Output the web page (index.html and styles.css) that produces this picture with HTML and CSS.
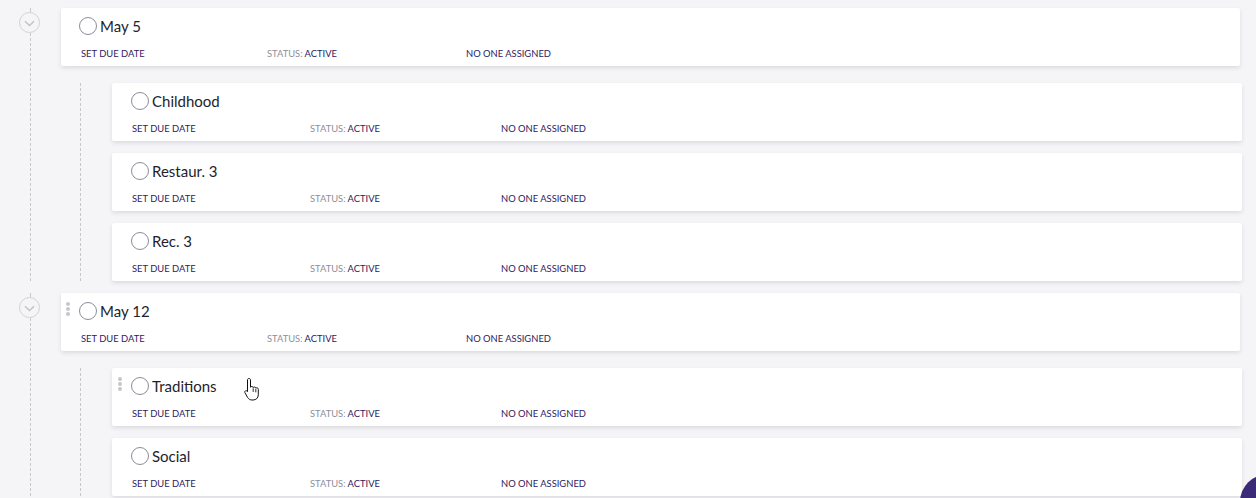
FILE: index.html
```html
<!DOCTYPE html>
<html lang="en">
<head>
  <meta charset="UTF-8">
  <title>Tasks</title>
  <link rel="stylesheet" href="styles.css">
</head>
<body>

  <div id="task-tree">

    <div class="group">
      <div class="rail">
        <div class="rail-top"></div>
        <div class="toggle">
          <svg width="11" height="7" viewBox="0 0 11 7"><path d="M1 1.2l4.5 4.3 4.5-4.3" fill="none" stroke="#c2c2ca" stroke-width="1.5"/></svg>
        </div>
        <div class="rail-line"></div>
      </div>
      <div class="group-body">
        <div class="card parent">
          <div class="card-title"><span class="check"></span>May 5</div>
          <div class="meta">
            <span class="due">SET DUE DATE</span>
            <span class="status"><em>STATUS:</em> ACTIVE</span>
            <span class="assignee">NO ONE ASSIGNED</span>
          </div>
        </div>
        <div class="children">
          <div class="child-rail"></div>
          <div class="child-list">
            <div class="card child">
              <div class="card-title"><span class="check"></span>Childhood</div>
              <div class="meta">
                <span class="due">SET DUE DATE</span>
                <span class="status"><em>STATUS:</em> ACTIVE</span>
                <span class="assignee">NO ONE ASSIGNED</span>
              </div>
            </div>
            <div class="card child">
              <div class="card-title"><span class="check"></span>Restaur. 3</div>
              <div class="meta">
                <span class="due">SET DUE DATE</span>
                <span class="status"><em>STATUS:</em> ACTIVE</span>
                <span class="assignee">NO ONE ASSIGNED</span>
              </div>
            </div>
            <div class="card child">
              <div class="card-title"><span class="check"></span>Rec. 3</div>
              <div class="meta">
                <span class="due">SET DUE DATE</span>
                <span class="status"><em>STATUS:</em> ACTIVE</span>
                <span class="assignee">NO ONE ASSIGNED</span>
              </div>
            </div>
          </div>
        </div>
      </div>
    </div>

    <div class="group">
      <div class="rail">
        <div class="rail-top"></div>
        <div class="toggle">
          <svg width="11" height="7" viewBox="0 0 11 7"><path d="M1 1.2l4.5 4.3 4.5-4.3" fill="none" stroke="#c2c2ca" stroke-width="1.5"/></svg>
        </div>
        <div class="rail-line"></div>
      </div>
      <div class="group-body">
        <div class="card parent">
          <span class="handle"><i></i><i></i><i></i></span>
          <div class="card-title"><span class="check"></span>May 12</div>
          <div class="meta">
            <span class="due">SET DUE DATE</span>
            <span class="status"><em>STATUS:</em> ACTIVE</span>
            <span class="assignee">NO ONE ASSIGNED</span>
          </div>
        </div>
        <div class="children">
          <div class="child-rail"></div>
          <div class="child-list">
            <div class="card child">
              <span class="handle"><i></i><i></i><i></i></span>
              <div class="card-title"><span class="check"></span>Traditions</div>
              <div class="meta">
                <span class="due">SET DUE DATE</span>
                <span class="status"><em>STATUS:</em> ACTIVE</span>
                <span class="assignee">NO ONE ASSIGNED</span>
              </div>
              <!-- mouse pointer captured in the screenshot -->
              <svg class="pointer" width="16" height="24" viewBox="0 0 16 24">
                <path d="M5 1.5c.9 0 1.5.6 1.5 1.5v7.2c.3-.5.8-.7 1.3-.7.8 0 1.3.5 1.4 1.1.3-.4.7-.6 1.2-.6.8 0 1.3.5 1.4 1.2.3-.3.6-.4 1-.4.9 0 1.5.7 1.5 1.6v5.4c0 3.1-2.2 5.2-5.2 5.2h-1c-2 0-3.3-.8-4.4-2.4L1 15.8c-.5-.7-.3-1.5.3-1.9.6-.4 1.4-.2 1.9.4l.3.4V3c0-.9.6-1.5 1.5-1.5z" fill="#fff" stroke="#111" stroke-width="1"/>
                <path d="M9.2 11.3v3.6M11.8 12.1v3.2" stroke="#111" stroke-width=".9"/>
              </svg>
            </div>
            <div class="card child">
              <div class="card-title"><span class="check"></span>Social</div>
              <div class="meta">
                <span class="due">SET DUE DATE</span>
                <span class="status"><em>STATUS:</em> ACTIVE</span>
                <span class="assignee">NO ONE ASSIGNED</span>
              </div>
            </div>
          </div>
        </div>
      </div>
    </div>

  </div>

  <div id="fab"></div>

</body>
</html>
```

FILE: styles.css
```css
/* Task tree */
body {
  font-family: Lato, "Open Sans", sans-serif;
  background-color: #f5f5f7;
  margin: 0;
  padding: 0;
  height: 498px;
  overflow: hidden;
}

#task-tree {
  padding-top: 8px;
}

.group {
  display: flex;
  padding-bottom: 12px;
}

/* left rail with the collapse toggle and dashed line */
.rail {
  width: 61px;
  flex: none;
  display: flex;
  flex-direction: column;
}

.rail-top {
  height: 4px;
  margin-left: 30px;
  border-left: 1px dashed #c8c8cc;
}

.toggle {
  width: 19px;
  height: 19px;
  margin-left: 19px;
  border: 1.5px solid #d2d2d7;
  border-radius: 50%;
  display: flex;
  align-items: center;
  justify-content: center;
  background-color: #f5f5f7;
}

.toggle svg {
  margin-top: 1px;
}

.rail-line {
  flex: 1;
  margin-left: 30px;
  border-left: 1px dashed #c8c8cc;
}

.group-body {
  flex: 1;
  margin-right: 16px;
}

.children {
  display: flex;
  margin-top: 17px;
  margin-right: -2px;
}

.child-rail {
  width: 31px;
  flex: none;
  margin-left: 19px;
  border-left: 1px dashed #c8c8cc;
}

.child-list {
  flex: 1;
  display: flex;
  flex-direction: column;
  gap: 12px;
}

/* cards */
.card {
  position: relative;
  height: 58px;
  box-sizing: border-box;
  background-color: #ffffff;
  border-radius: 2px;
  box-shadow: 0 2px 4px rgba(40, 40, 60, 0.12);
  padding: 8px 0 0 18px;
}

.card.child {
  padding-left: 19px;
}

.card-title {
  display: flex;
  align-items: center;
  height: 20px;
  font-size: 15px;
  color: #1e1e2c;
}

.check {
  width: 16px;
  height: 16px;
  border: 1.5px solid #8c8c9a;
  border-radius: 50%;
  margin-right: 3px;
}

.meta {
  display: flex;
  margin-top: 12px;
  padding-left: 2px;
  font-size: 9.4px;
  color: #2f2060;
  line-height: 11px;
}

.card.child .meta {
  padding-left: 1px;
}

.meta em {
  font-style: normal;
  color: #8e8e98;
}

.parent .due { width: 186px; }
.parent .status { width: 199px; }
.child .due { width: 178px; }
.child .status { width: 191px; }

.handle {
  position: absolute;
  left: 5px;
  top: 9px;
  display: flex;
  flex-direction: column;
  gap: 1px;
}

.card.child .handle {
  left: 6px;
}

.handle i {
  width: 4px;
  height: 4px;
  border-radius: 50%;
  background-color: #c6c6cc;
}

.pointer {
  position: absolute;
  left: 132px;
  top: 9px;
}

#fab {
  position: fixed;
  right: -40px;
  bottom: -32px;
  width: 56px;
  height: 56px;
  border-radius: 50%;
  background-color: #3b2a78;
}
```
